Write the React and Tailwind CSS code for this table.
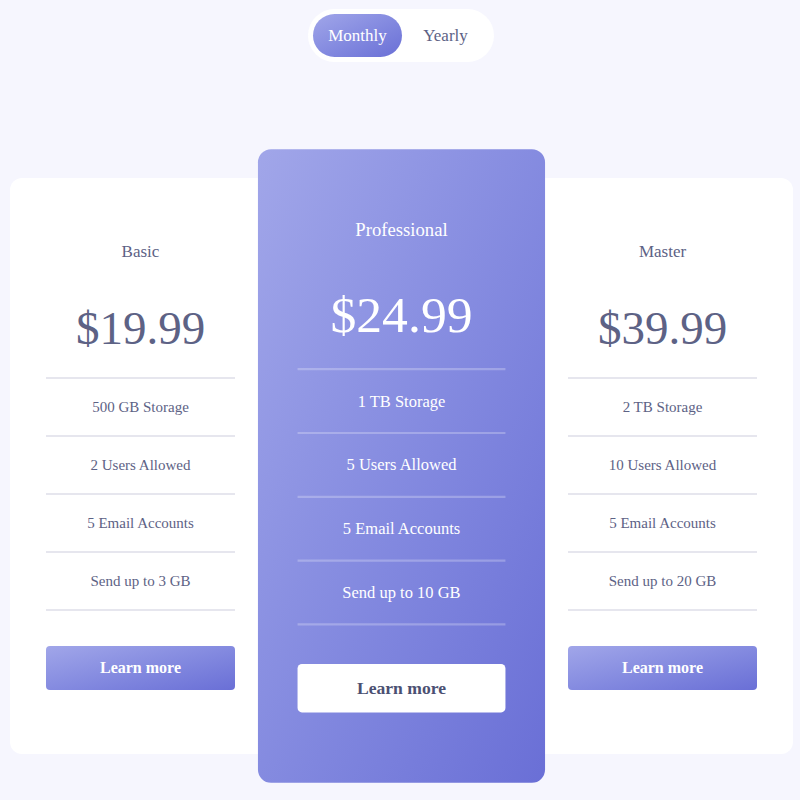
import React, { useState } from 'react';

const plans = [
  {
    name: 'Basic',
    price: '$19.99',
    features: ['500 GB Storage', '2 Users Allowed', '5 Email Accounts', 'Send up to 3 GB'],
  },
  {
    name: 'Professional',
    price: '$24.99',
    features: ['1 TB Storage', '5 Users Allowed', '5 Email Accounts', 'Send up to 10 GB'],
    featured: true,
  },
  {
    name: 'Master',
    price: '$39.99',
    features: ['2 TB Storage', '10 Users Allowed', '5 Email Accounts', 'Send up to 20 GB'],
  },
];

const PlanCard = ({ plan }) => {
  const featured = plan.featured;
  return (
    <div
      className={
        featured
          ? 'relative z-10 w-[261px] h-[576px] shrink-0 scale-110 rounded-[12px] bg-gradient-to-br from-[#a1a6e9] to-[#6a6fd6] text-white px-[36px] pt-[62px] pb-[64px] flex flex-col'
          : 'w-[261px] h-[576px] shrink-0 rounded-[12px] bg-white text-[#5d6285] px-[36px] pt-[62px] pb-[64px] flex flex-col'
      }
    >
      <h3 className="text-center text-[17px] leading-[24px]">{plan.name}</h3>
      <div className="mt-[34px] text-center text-[47px] leading-[60px]">{plan.price}</div>

      {/* Features */}
      <ul
        className={
          featured
            ? 'mt-[19px] border-t-2 border-white/25'
            : 'mt-[19px] border-t-2 border-[#e6e6ee]'
        }
      >
        {plan.features.map((f) => (
          <li
            key={f}
            className={
              featured
                ? 'h-[58px] flex items-center justify-center border-b-2 border-white/25 text-[15px]'
                : 'h-[58px] flex items-center justify-center border-b-2 border-[#e6e6ee] text-[15px]'
            }
          >
            {f}
          </li>
        ))}
      </ul>

      <button
        className={
          featured
            ? 'mt-[35px] h-[44px] w-full rounded-[4px] bg-white text-[#4b5072] text-[16px] font-bold'
            : 'mt-[35px] h-[44px] w-full rounded-[4px] bg-gradient-to-br from-[#a1a6e9] to-[#6a6fd6] text-white text-[16px] font-bold'
        }
      >
        Learn more
      </button>
    </div>
  );
};

const App = () => {
  const [period, setPeriod] = useState('monthly');

  return (
    <div
      className="min-h-[800px] bg-[#f6f6fe] pt-[9px]"
      style={{ fontFamily: '"Liberation Serif", "Times New Roman", serif' }}
    >
      {/* Billing toggle */}
      <div className="flex justify-center">
        <div className="ml-[2px] w-[186px] h-[53px] rounded-full bg-white p-[5px] flex items-center">
          <button
            onClick={() => setPeriod('monthly')}
            className={
              period === 'monthly'
                ? 'w-[89px] h-[43px] rounded-full bg-gradient-to-br from-[#a1a6e9] to-[#6a6fd6] text-white text-[17px]'
                : 'w-[89px] h-[43px] rounded-full text-[#5d6285] text-[17px]'
            }
          >
            Monthly
          </button>
          <button
            onClick={() => setPeriod('yearly')}
            className={
              period === 'yearly'
                ? 'flex-1 h-[43px] rounded-full bg-gradient-to-br from-[#a1a6e9] to-[#6a6fd6] text-white text-[17px]'
                : 'flex-1 h-[43px] rounded-full text-[#5d6285] text-[17px]'
            }
          >
            Yearly
          </button>
        </div>
      </div>

      {/* Plans */}
      <div className="mt-[116px] ml-[10px] flex">
        {plans.map((p) => (
          <PlanCard key={p.name} plan={p} />
        ))}
      </div>
    </div>
  );
};

export default App;
